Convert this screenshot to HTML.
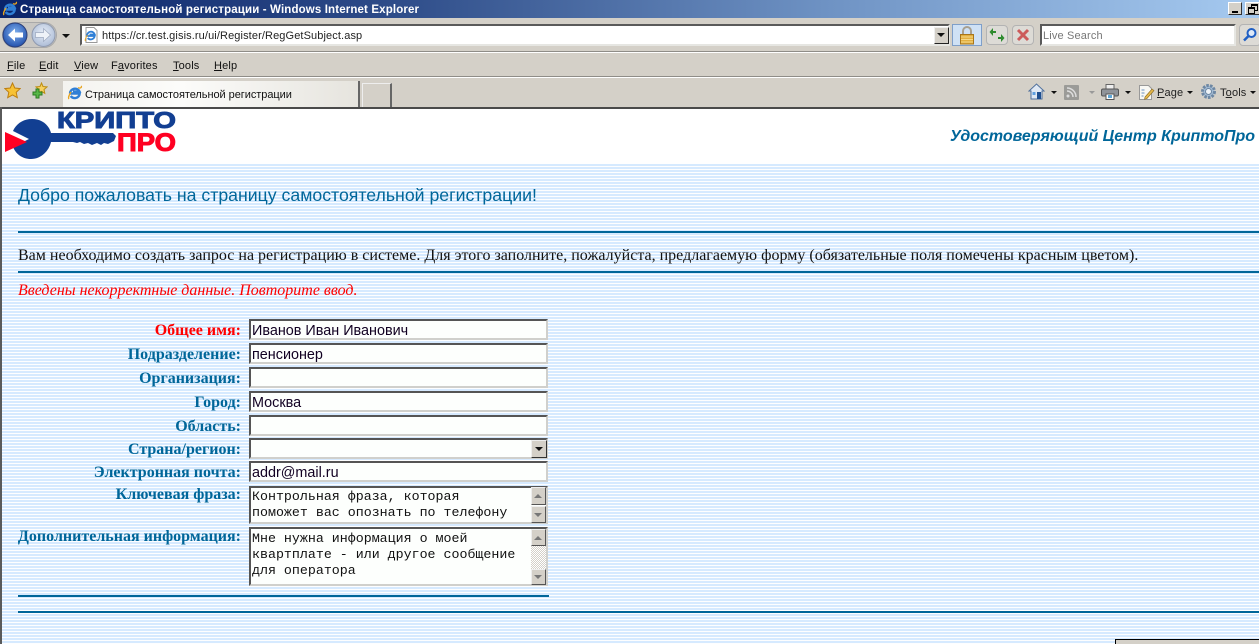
<!DOCTYPE html>
<html lang="ru"><head><meta charset="utf-8"><title>Страница самостоятельной регистрации</title>
<style>
html,body{margin:0;padding:0;width:1259px;height:644px;overflow:hidden;background:#d4d0c8;font-family:"Liberation Sans",sans-serif}
.a{position:absolute;white-space:pre}
#root{position:relative;width:1259px;height:644px;overflow:hidden}
.menu{font-size:11px;color:#111;top:60px;letter-spacing:.15px}
u{text-decoration:underline}
.lab{font:bold 16px "Liberation Serif",serif;color:#006699;right:1018px;text-align:right}
.inp{left:249px;width:294px;height:17px;background:#fdfffd;border:2px solid;border-color:#555 #d0d0cc #d0d0cc #555;font:14.4px/21px "Liberation Sans",sans-serif;color:#110022;padding-left:1px;box-sizing:content-box}
.ta{left:249px;width:294px;background:#fdfffd;border:2px solid;border-color:#555 #d0d0cc #d0d0cc #555;font:13.3px/16px "Liberation Mono",monospace;color:#111;padding:0 0 0 1px;}
.sb{width:15px;height:15px;background:#d4d0c8;border:1px solid;border-color:#eee #555 #555 #eee;box-sizing:border-box}
.line{background:#006699;height:2px}
.arr{width:0;height:0;border-left:4px solid transparent;border-right:4px solid transparent;border-top:4px solid #111}
.tb{font-size:11px;color:#222;top:87px;letter-spacing:.15px}
svg{position:absolute;display:block}
</style></head><body><div id="root">

<div class="a" style="left:0;top:0;width:1259px;height:18px;background:linear-gradient(90deg,#0a246a 0,#2c4a87 30%,#6f93c4 66%,#a6caf0 100%)"></div>
<svg style="left:2px;top:1px" width="16" height="16" viewBox="0 0 16 16"><path d="M3 8.500a5 5 0 0 1 9.500-2H6M3.200 8.500h9.500a5 5 0 0 1-9 2.500" fill="none" stroke="#2f7fd6" stroke-width="2.400"/><path d="M14 1c1.500 1-1 3-3 1.500M2 14c-1-1 0-4 2-7" fill="none" stroke="#e8a520" stroke-width="1.300"/></svg>
<div class="a" style="left:20px;top:3px;font-size:11.5px;line-height:14px;font-weight:bold;color:#fff;letter-spacing:.14px">Страница самостоятельной регистрации - Windows Internet Explorer</div>
<div class="a" style="left:1228px;top:2px;width:14px;height:13px;background:#d4d0c8;border-top:1px solid #fff;border-left:1px solid #fff;border-bottom:1px solid #333;border-right:1px solid #333;box-sizing:border-box"><div class="a" style="left:3px;top:8px;width:6px;height:2px;background:#000"></div></div>
<div class="a" style="left:1245px;top:2px;width:14px;height:13px;background:#d4d0c8;border-top:1px solid #fff;border-left:1px solid #fff;border-bottom:1px solid #333;box-sizing:border-box"><div class="a" style="left:5px;top:1px;width:5px;height:4px;border:1px solid #000;border-top-width:2px"></div><div class="a" style="left:2px;top:4px;width:5px;height:4px;border:1px solid #000;border-top-width:2px;background:#d4d0c8"></div></div>

<!-- address row -->
<svg style="left:2px;top:20px" width="56" height="30" viewBox="0 0 56 30">
<defs><radialGradient id="bk" cx=".5" cy=".4" r=".65"><stop offset="0" stop-color="#7fb0ee"/><stop offset="1" stop-color="#1c4aa8"/></radialGradient>
<radialGradient id="fw" cx=".5" cy=".4" r=".65"><stop offset="0" stop-color="#e6edf7"/><stop offset="1" stop-color="#a9b9d4"/></radialGradient></defs>
<rect x="0.500" y="2.500" width="54" height="25" rx="12.500" fill="#c9c7c3" stroke="#a9a9a9"/>
<circle cx="13" cy="15" r="12" fill="url(#bk)" stroke="#2c3f78"/>
<path d="M6 15l7-6.500v4h8v5h-8v4z" fill="#fff"/>
<circle cx="41.500" cy="15" r="11.500" fill="url(#fw)" stroke="#8f9ab0"/>
<path d="M48.500 15l-7-6.500v4h-8v5h8v4z" fill="#eef2f8" stroke="#9aa6bd" stroke-width=".7"/>
</svg>
<div class="a arr" style="left:62px;top:34px"></div>
<div class="a" style="left:80px;top:24px;width:870px;height:22px;background:#fff;border:2px solid;border-color:#5a5a5a #e6e6e2 #e6e6e2 #5a5a5a;box-sizing:border-box"></div>
<svg style="left:83px;top:27px" width="16" height="16" viewBox="0 0 16 16"><path d="M3 .5h8l3 3v12H3z" fill="#fff" stroke="#999"/><path d="M4 9a4 4 0 0 1 7.800-1.500H6.500M4.200 9h7.500a4 4 0 0 1-7 2" fill="none" stroke="#2f7fd6" stroke-width="1.800"/><path d="M2.500 14c-1-1 0-3 2-6" fill="none" stroke="#e8a520"/></svg>
<div class="a" style="left:102px;top:29px;font-size:11px;line-height:14px;color:#222;letter-spacing:.11px">https://cr.test.gisis.ru/ui/Register/RegGetSubject.asp</div>
<div class="a" style="left:934px;top:27px;width:15px;height:17px;background:#d4d0c8;border:1px solid;border-color:#eee #222 #222 #eee;box-sizing:border-box"><div class="a arr" style="left:2px;top:5px"></div></div>
<div class="a" style="left:952px;top:24px;width:30px;height:22px;background:#cfe1f5;border:1px solid #7f9fc9;box-sizing:border-box"></div>
<svg style="left:958px;top:25px" width="18" height="20" viewBox="0 0 18 20"><path d="M5 10V6a4 4 0 0 1 8 0v4" fill="none" stroke="#a8a090" stroke-width="2"/><rect x="2.500" y="9.500" width="13" height="9.500" fill="#e3b040" stroke="#a8761c"/><path d="M3 12h12M3 14.500h12M3 17h12" stroke="#f6d98a"/></svg>
<div class="a" style="left:986px;top:25px;width:22px;height:20px;background:#dddbd6;border:1px solid #b3b3b3;border-radius:4px;box-sizing:border-box"></div>
<svg style="left:989px;top:27px" width="16" height="16" viewBox="0 0 16 16"><path d="M7 4H4V1L.5 5 4 9V6h3zM9 12h3v3l3.500-4L12 7v3H9z" fill="#2e8b2e"/></svg>
<div class="a" style="left:1012px;top:25px;width:22px;height:20px;background:#dddbd6;border:1px solid #b3b3b3;border-radius:4px;box-sizing:border-box"></div>
<svg style="left:1016px;top:28px" width="14" height="14" viewBox="0 0 14 14"><path d="M2 2l10 10M12 2L2 12" stroke="#cc5b5b" stroke-width="3"/></svg>
<div class="a" style="left:1040px;top:24px;width:196px;height:22px;background:#fff;border:2px solid;border-color:#5a5a5a #e6e6e2 #e6e6e2 #5a5a5a;box-sizing:border-box"></div>
<div class="a" style="left:1043px;top:29px;font-size:11px;line-height:14px;color:#777;letter-spacing:.15px">Live Search</div>
<div class="a" style="left:1239px;top:24px;width:22px;height:22px;background:#dddbd6;border:1px solid #b3b3b3;border-radius:4px;box-sizing:border-box"></div>
<svg style="left:1242px;top:27px" width="16" height="16" viewBox="0 0 16 16"><circle cx="9.500" cy="6" r="4" fill="#dfeaf8" stroke="#1f5fc4" stroke-width="2"/><path d="M6.500 9L2 13.500" stroke="#1f5fc4" stroke-width="2.500"/></svg>

<div class="a" style="left:0;top:51px;width:1259px;height:2px;background:linear-gradient(#8f8d88 50%,#fff 50%)"></div>

<!-- menu -->
<div class="a menu" style="left:7px"><u>F</u>ile</div>
<div class="a menu" style="left:39px"><u>E</u>dit</div>
<div class="a menu" style="left:74px"><u>V</u>iew</div>
<div class="a menu" style="left:111px">F<u>a</u>vorites</div>
<div class="a menu" style="left:173px"><u>T</u>ools</div>
<div class="a menu" style="left:214px"><u>H</u>elp</div>
<div class="a" style="left:0;top:76px;width:1259px;height:2px;background:linear-gradient(#8f8d88 50%,#fff 50%)"></div>

<!-- favorites / tabs -->
<svg style="left:4px;top:82px" width="17" height="17" viewBox="0 0 17 17"><path d="M8.500 1l2.300 5 5.400.6-4 3.700 1.100 5.400-4.800-2.700-4.800 2.700 1.100-5.400-4-3.700 5.400-.6z" fill="#f7c236" stroke="#bd7e10"/></svg>
<svg style="left:31px;top:82px" width="17" height="17" viewBox="0 0 17 17"><path d="M10.500 1l1.500 3.500 4 .4-3 2.600.8 3.800-3.300-2-3.300 2 .8-3.800-3-2.600 4-.4z" fill="#f7d060" stroke="#bd8e10"/><path d="M5 7v3H2v3h3v3h3v-3h3v-3H8V7z" fill="#58b847" stroke="#2c7a22"/></svg>
<div class="a" style="left:63px;top:81px;width:297px;height:26px;background:linear-gradient(90deg,#f4f3ef,#fcfcfa 40%,#e6e4de);border-right:2px solid #666;box-sizing:border-box"></div>
<svg style="left:67px;top:85px" width="16" height="16" viewBox="0 0 16 16"><path d="M3 8.500a5 5 0 0 1 9.500-2H6M3.200 8.500h9.500a5 5 0 0 1-9 2.500" fill="none" stroke="#2f7fd6" stroke-width="2.400"/><path d="M14 1c1.500 1-1 3-3 1.500M2 14c-1-1 0-4 2-7" fill="none" stroke="#e8a520" stroke-width="1.300"/></svg>
<div class="a" style="left:85px;top:88px;font-size:11px;line-height:14px;color:#111;letter-spacing:-.05px">Страница самостоятельной регистрации</div>
<div class="a" style="left:362px;top:83px;width:30px;height:24px;background:#d4d0c8;border-top:1px solid #eee;border-left:1px solid #eee;border-right:2px solid #666;box-sizing:border-box"></div>

<svg style="left:1028px;top:83px" width="17" height="17" viewBox="0 0 17 17"><path d="M1 8l7.500-7L16 8h-2v8H3V8z" fill="#dfe8f4" stroke="#50709c"/><rect x="9" y="9" width="4" height="7" fill="#1f4f90"/><rect x="4.500" y="9" width="3" height="3" fill="#5f9fe0"/></svg>
<div class="a arr" style="left:1051px;top:91px;border-left-width:3px;border-right-width:3px;border-top-width:3px"></div>
<svg style="left:1064px;top:85px" width="15" height="15" viewBox="0 0 15 15"><rect width="15" height="15" rx="1" fill="#9b9b98"/><circle cx="4" cy="11" r="1.500" fill="#ddd"/><path d="M3 6a6 6 0 0 1 6 6M3 3a9 9 0 0 1 9 9" fill="none" stroke="#ddd" stroke-width="1.500"/></svg>
<div class="a arr" style="left:1089px;top:91px;border-left-width:3px;border-right-width:3px;border-top:3px solid #999"></div>
<svg style="left:1101px;top:84px" width="18" height="16" viewBox="0 0 18 16"><rect x="5" y=".5" width="8" height="5" fill="#eee" stroke="#666"/><rect x=".5" y="5" width="17" height="7" rx="1.500" fill="#8f9399" stroke="#555"/><rect x="5" y="10" width="8" height="5.500" fill="#fff" stroke="#555"/><rect x="7" y="11" width="4" height="3" fill="#5fa8d8"/></svg>
<div class="a arr" style="left:1125px;top:91px;border-left-width:3px;border-right-width:3px;border-top-width:3px"></div>
<svg style="left:1138px;top:84px" width="17" height="17" viewBox="0 0 17 17"><path d="M1.500 1.500h9l3 3v11h-12z" fill="#f8f8f4" stroke="#999"/><path d="M3.500 6h3M3.500 9h3M3.500 12h2" stroke="#6a8fc0"/><path d="M7 13l7-8 2 1.500-7 8-2.500.8z" fill="#e6b84a" stroke="#8a6a20" stroke-width=".6"/></svg>
<div class="a tb" style="left:1157px"><u>P</u>age</div>
<div class="a arr" style="left:1187px;top:91px;border-left-width:3px;border-right-width:3px;border-top-width:3px"></div>
<svg style="left:1200px;top:83px" width="17" height="17" viewBox="0 0 17 17"><circle cx="8.500" cy="8.500" r="6" fill="#a5bdd6" stroke="#6d87a3" stroke-width="3" stroke-dasharray="2.500 1.200"/><circle cx="8.500" cy="8.500" r="3" fill="#eef3f8" stroke="#6d87a3"/></svg>
<div class="a tb" style="left:1220px">T<u>o</u>ols</div>
<div class="a arr" style="left:1250px;top:91px;border-left-width:3px;border-right-width:3px;border-top-width:3px"></div>

<!-- content -->
<div class="a" style="left:0;top:107px;width:1259px;height:2px;background:#4a4a4a"></div>
<div class="a" style="left:0;top:107px;width:2px;height:537px;background:#5a5a5a;z-index:5"></div>
<div class="a" style="left:2px;top:109px;width:1257px;height:55px;background:#fff"></div>
<div class="a" style="left:2px;top:164px;width:1257px;height:480px;background:repeating-linear-gradient(180deg,#d6eaff 0,#d6eaff 2px,#fdfeff 2px,#fdfeff 3px)"></div>

<!-- logo -->
<svg style="left:5px;top:110px" width="175" height="54" viewBox="0 0 175 54">
<path d="M27 9c10 0 17 6 19 14h62l3 3-2 5-6 3-4-1-3 2-4-2-5 2-4-2-4 1-4-2-3 1-4-1H46c-2 9-10 17-20 17-9 0-15-5-18-12l16-8-16-8c3-7 10-12 19-12z" fill="#123f92"/>
<path d="M0 22l22 10L0 42z" fill="#ff0022"/>
<text x="52" y="18" font-family="Liberation Sans,sans-serif" font-weight="bold" font-size="23" fill="#123f92" textLength="119" lengthAdjust="spacingAndGlyphs" stroke="#123f92" stroke-width="1">КРИПТО</text>
<text x="112" y="41" font-family="Liberation Sans,sans-serif" font-weight="bold" font-size="25" fill="#ff0022" textLength="59" lengthAdjust="spacingAndGlyphs" stroke="#ff0022" stroke-width="1">ПРО</text>
</svg>

<div class="a" style="right:4px;top:127px;font-size:16px;line-height:19px;font-weight:bold;font-style:italic;color:#006699;letter-spacing:-.02px">Удостоверяющий Центр КриптоПро</div>
<div class="a" style="left:18px;top:184px;font-size:17.7px;line-height:22px;color:#006699">Добро пожаловать на страницу самостоятельной регистрации!</div>
<div class="a line" style="left:18px;top:231px;width:1241px"></div>
<div class="a" style="left:18px;top:247px;font:16px/18px 'Liberation Serif',serif;color:#111">Вам необходимо создать запрос на регистрацию в системе. Для этого заполните, пожалуйста, предлагаемую форму (обязательные поля помечены красным цветом).</div>
<div class="a line" style="left:18px;top:271px;width:1241px"></div>
<div class="a" style="left:18px;top:282px;font:italic 16px/18px 'Liberation Serif',serif;color:#ff0000">Введены некорректные данные. Повторите ввод.</div>

<div class="a lab" style="top:322px;color:#ff0000">Общее имя:</div>
<div class="a lab" style="top:346px">Подразделение:</div>
<div class="a lab" style="top:370px">Организация:</div>
<div class="a lab" style="top:394px">Город:</div>
<div class="a lab" style="top:418px">Область:</div>
<div class="a lab" style="top:441px">Страна/регион:</div>
<div class="a lab" style="top:464px">Электронная почта:</div>
<div class="a lab" style="top:486px">Ключевая фраза:</div>
<div class="a lab" style="top:528px">Дополнительная информация:</div>

<div class="a inp" style="top:319px">Иванов Иван Иванович</div>
<div class="a inp" style="top:343px">пенсионер</div>
<div class="a inp" style="top:367px"></div>
<div class="a inp" style="top:391px">Москва</div>
<div class="a inp" style="top:415px"></div>
<div class="a inp" style="top:438px"></div>
<div class="a" style="left:531px;top:440px;width:16px;height:18px;background:#d4d0c8;border:1px solid;border-color:#eee #333 #333 #eee;box-sizing:border-box"><div class="a arr" style="left:3px;top:6px"></div></div>
<div class="a inp" style="top:461px">addr@mail.ru</div>

<div class="a ta" style="top:486px;height:34px"><div style="padding-top:1px">Контрольная фраза, которая
поможет вас опознать по телефону</div></div>
<div class="a sb" style="left:531px;top:487px;height:18px"><div class="a arr" style="left:2px;top:6px;border-top:0;border-bottom:4px solid #777"></div></div>
<div class="a sb" style="left:531px;top:506px;height:17px"><div class="a arr" style="left:2px;top:6px;border-top-color:#777"></div></div>

<div class="a ta" style="top:527px;height:55px"><div style="padding-top:2px">Мне нужна информация о моей
квартплате - или другое сообщение
для оператора</div></div>
<div class="a" style="left:531px;top:529px;width:15px;height:55px;background:repeating-conic-gradient(#d4d0c8 0 25%,#fff 0 50%) 0 0/2px 2px"></div>
<div class="a sb" style="left:531px;top:529px;height:17px"><div class="a arr" style="left:2px;top:6px;border-top:0;border-bottom:4px solid #777"></div></div>
<div class="a sb" style="left:531px;top:569px;height:16px"><div class="a arr" style="left:2px;top:5px;border-top-color:#777"></div></div>

<div class="a line" style="left:18px;top:595px;width:531px"></div>
<div class="a line" style="left:18px;top:611px;width:1241px"></div>
<div class="a" style="left:1115px;top:639px;width:144px;height:5px;background:#d4d0c8;border-top:1px solid #000;border-left:1px solid #000;box-sizing:border-box"></div>
</div></body></html>
